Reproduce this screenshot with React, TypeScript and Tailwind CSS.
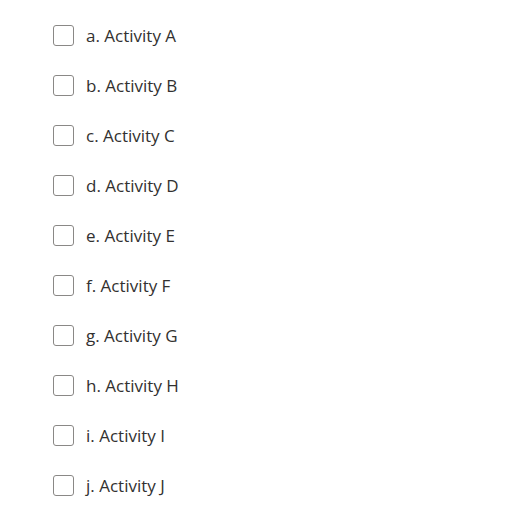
const activities = ["a. Activity A", "b. Activity B", "c. Activity C", "d. Activity D", "e. Activity E", "f. Activity F", "g. Activity G", "h. Activity H", "i. Activity I", "j. Activity J"];

export default function App() {
  return (
    <div className="min-h-screen bg-white pt-[10px] pl-[53px]" style={{ fontFamily: '"Open Sans", "Noto Sans", sans-serif' }}>
      <div className="flex flex-col">
        {activities.map((label) => (
          <label key={label} className="flex h-[50px] items-center gap-[12px] cursor-pointer">
            <input type="checkbox" className="peer sr-only" />
            <span className="h-[21px] w-[21px] rounded-[3px] border border-[#8a8886] bg-white" />
            <span className="text-[17px] text-[#323130] leading-none pt-[1px]">{label}</span>
          </label>
        ))}
      </div>
    </div>
  );
}
